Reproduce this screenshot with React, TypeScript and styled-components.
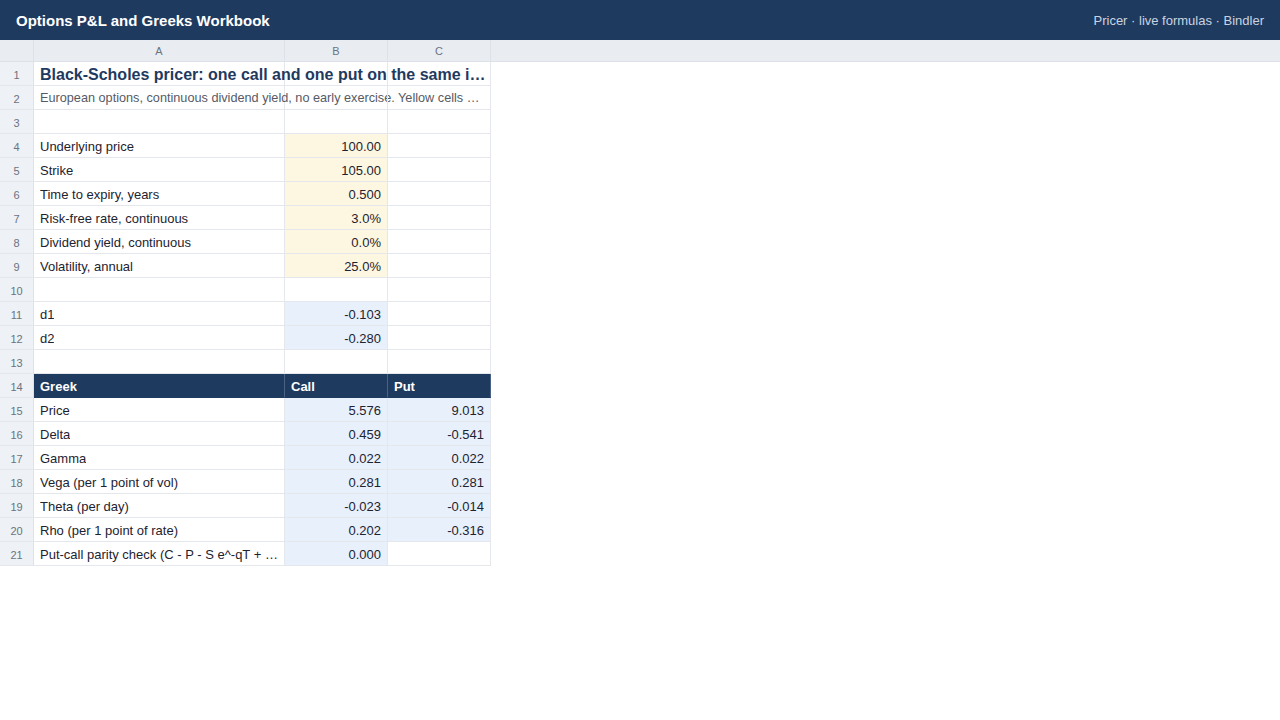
import React from "react";
import styled, { createGlobalStyle } from "styled-components";

const GlobalStyle = createGlobalStyle`
  html, body {
    margin: 0;
    padding: 0;
    background: #ffffff;
    font-family: "Liberation Sans", Arial, Helvetica, sans-serif;
  }
`;

type Fill = "none" | "input" | "calc" | "head";

type Cell = { text?: string; fill?: Fill; align?: "left" | "right" };

type Row = { kind?: "title" | "subtitle" | "normal"; cells: Cell[] };

const L = (text: string): Cell => ({ text, align: "left" });
const In = (text: string): Cell => ({ text, fill: "input", align: "right" });
const Ca = (text: string): Cell => ({ text, fill: "calc", align: "right" });
const E: Cell = {};
const H = (text: string): Cell => ({ text, fill: "head", align: "left" });

const rows: Row[] = [
  {
    kind: "title",
    cells: [L("Black-Scholes pricer: one call and one put on the same i…"), E, E],
  },
  {
    kind: "subtitle",
    cells: [
      L("European options, continuous dividend yield, no early exercise. Yellow cells …"),
      E,
      E,
    ],
  },
  { cells: [E, E, E] },
  { cells: [L("Underlying price"), In("100.00"), E] },
  { cells: [L("Strike"), In("105.00"), E] },
  { cells: [L("Time to expiry, years"), In("0.500"), E] },
  { cells: [L("Risk-free rate, continuous"), In("3.0%"), E] },
  { cells: [L("Dividend yield, continuous"), In("0.0%"), E] },
  { cells: [L("Volatility, annual"), In("25.0%"), E] },
  { cells: [E, E, E] },
  { cells: [L("d1"), Ca("-0.103"), E] },
  { cells: [L("d2"), Ca("-0.280"), E] },
  { cells: [E, E, E] },
  { cells: [H("Greek"), H("Call"), H("Put")] },
  { cells: [L("Price"), Ca("5.576"), Ca("9.013")] },
  { cells: [L("Delta"), Ca("0.459"), Ca("-0.541")] },
  { cells: [L("Gamma"), Ca("0.022"), Ca("0.022")] },
  { cells: [L("Vega (per 1 point of vol)"), Ca("0.281"), Ca("0.281")] },
  { cells: [L("Theta (per day)"), Ca("-0.023"), Ca("-0.014")] },
  { cells: [L("Rho (per 1 point of rate)"), Ca("0.202"), Ca("-0.316")] },
  { cells: [L("Put-call parity check (C - P - S e^-qT + …"), Ca("0.000"), E] },
];

const fillColor: Record<Fill, string> = {
  none: "#ffffff",
  input: "#fdf6e1",
  calc: "#e8f0fc",
  head: "#1f3a5f",
};

export default function App() {
  return (
    <Page>
      <GlobalStyle />
      <TopBar>
        <AppTitle>Options P&amp;L and Greeks Workbook</AppTitle>
        <Meta>Pricer · live formulas · Bindler</Meta>
      </TopBar>
      <ColumnBar>
        <Corner />
        <ColLetter $w={251}>A</ColLetter>
        <ColLetter $w={103}>B</ColLetter>
        <ColLetter $w={103}>C</ColLetter>
      </ColumnBar>
      <Sheet>
        {rows.map((row, i) => {
          const spill = row.kind === "title" || row.kind === "subtitle";
          return (
            <React.Fragment key={i}>
              <RowNum>{i + 1}</RowNum>
              {row.cells.map((c, j) => (
                <GridCell
                  key={j}
                  $fill={c.fill ?? "none"}
                  $align={c.align ?? "left"}
                  $bold={c.fill === "head"}
                  $spill={spill}
                >
                  {spill && j === 0 ? (
                    <SpillText $title={row.kind === "title"}>{c.text}</SpillText>
                  ) : (
                    <CellText>{c.text}</CellText>
                  )}
                </GridCell>
              ))}
            </React.Fragment>
          );
        })}
      </Sheet>
    </Page>
  );
}

const Page = styled.div`
  width: 1280px;
  min-height: 720px;
  background: #ffffff;
`;

const TopBar = styled.header`
  height: 40px;
  background: #1f3a5f;
  display: flex;
  align-items: center;
  justify-content: space-between;
  padding: 0 16px;
  box-sizing: border-box;
`;

const AppTitle = styled.div`
  color: #ffffff;
  font-size: 15px;
  font-weight: 700;
`;

const Meta = styled.div`
  color: #c9d4e2;
  font-size: 13px;
`;

const ColumnBar = styled.div`
  height: 22px;
  display: flex;
  background: #e9edf2;
  border-bottom: 1px solid #dde2e8;
  box-sizing: border-box;
`;

const Corner = styled.div`
  width: 34px;
  border-right: 1px solid #dde2e8;
  box-sizing: border-box;
`;

const ColLetter = styled.div<{ $w: number }>`
  width: ${(p) => p.$w}px;
  border-right: 1px solid #dde2e8;
  box-sizing: border-box;
  display: flex;
  align-items: center;
  justify-content: center;
  padding-top: 1px;
  font-size: 11px;
  color: #6b7380;
`;

const Sheet = styled.div`
  display: grid;
  grid-template-columns: 34px 251px 103px 103px;
  grid-auto-rows: 24px;
`;

const RowNum = styled.div`
  background: #eef1f5;
  border-right: 1px solid #dde2e8;
  border-bottom: 1px solid #e4e7eb;
  box-sizing: border-box;
  display: flex;
  align-items: center;
  justify-content: center;
  padding-top: 2px;
  font-size: 11px;
  color: #6b7380;
`;

const GridCell = styled.div<{
  $fill: Fill;
  $align: "left" | "right";
  $bold: boolean;
  $spill: boolean;
}>`
  background: ${(p) => (p.$spill ? "transparent" : fillColor[p.$fill])};
  border-right: 1px solid ${(p) => (p.$fill === "head" ? "#4a6283" : "#e4e7eb")};
  border-bottom: 1px solid ${(p) => (p.$fill === "head" ? "#1f3a5f" : "#e4e7eb")};
  box-sizing: border-box;
  display: flex;
  align-items: center;
  justify-content: ${(p) => (p.$align === "right" ? "flex-end" : "flex-start")};
  padding: 1px 6px 0;
  min-width: 0;
  overflow: ${(p) => (p.$spill ? "visible" : "hidden")};
  font-size: 13px;
  font-weight: ${(p) => (p.$bold ? 700 : 400)};
  color: ${(p) => (p.$fill === "head" ? "#ffffff" : "#1d2330")};
`;

const CellText = styled.span`
  white-space: nowrap;
  overflow: hidden;
  text-overflow: ellipsis;
`;

const SpillText = styled.span<{ $title: boolean }>`
  flex: none;
  width: 449px;
  white-space: nowrap;
  overflow: visible;
  font-size: ${(p) => (p.$title ? "16px" : "12.7px")};
  font-weight: ${(p) => (p.$title ? 700 : 400)};
  color: ${(p) => (p.$title ? "#1f3a5f" : "#555b66")};
  padding-top: ${(p) => (p.$title ? "2px" : "0")};
`;
